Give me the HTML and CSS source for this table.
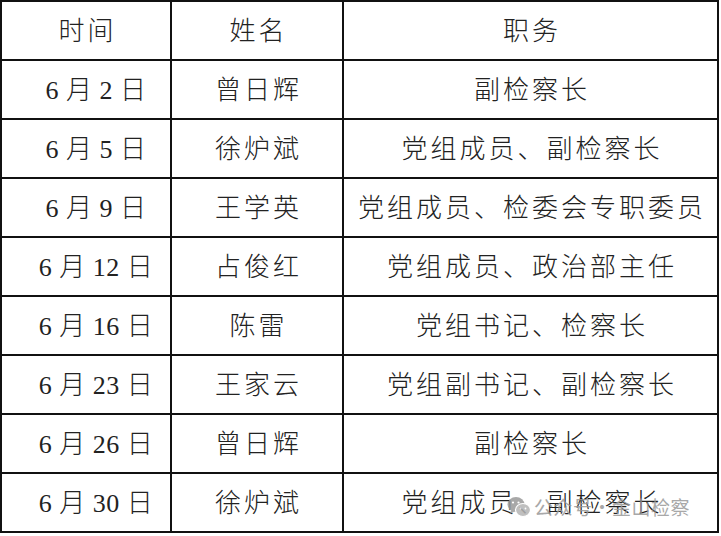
FILE: index.html
```html
<!DOCTYPE html>
<html lang="zh">
<head>
<meta charset="utf-8">
<link rel="stylesheet" href="styles.css">
</head>
<body>
<div class="sheet">
  <div class="grid">
    <div class="cell">时间</div><div class="cell">姓名</div><div class="cell">职务</div>
    <div class="cell date">6 月 2 日</div><div class="cell">曾日辉</div><div class="cell">副检察长</div>
    <div class="cell date">6 月 5 日</div><div class="cell">徐炉斌</div><div class="cell">党组成员、副检察长</div>
    <div class="cell date">6 月 9 日</div><div class="cell">王学英</div><div class="cell">党组成员、检委会专职委员</div>
    <div class="cell date">6 月 12 日</div><div class="cell">占俊红</div><div class="cell">党组成员、政治部主任</div>
    <div class="cell date">6 月 16 日</div><div class="cell">陈雷</div><div class="cell">党组书记、检察长</div>
    <div class="cell date">6 月 23 日</div><div class="cell">王家云</div><div class="cell">党组副书记、副检察长</div>
    <div class="cell date">6 月 26 日</div><div class="cell">曾日辉</div><div class="cell">副检察长</div>
    <div class="cell date">6 月 30 日</div><div class="cell">徐炉斌</div><div class="cell">党组成员、副检察长</div>
  </div>
  <div class="watermark">
    <svg class="wm-icon" width="24" height="22" viewBox="0 0 24 22">
      <ellipse cx="9" cy="8.5" rx="8.5" ry="7.5" fill="#9a9a9a"/>
      <path d="M4 14 L3 18 L7.5 15.5 Z" fill="#9a9a9a"/>
      <ellipse cx="16" cy="14" rx="7.5" ry="6.5" fill="#b5b5b5" stroke="#fff" stroke-width="1.2"/>
      <circle cx="6" cy="6.5" r="1.1" fill="#fff"/>
      <circle cx="11.5" cy="6.5" r="1.1" fill="#fff"/>
      <circle cx="13.5" cy="12.5" r="0.9" fill="#fff"/>
      <circle cx="18.5" cy="12.5" r="0.9" fill="#fff"/>
    </svg>
    <span class="wm-text">公众号·金山检察</span>
  </div>
</div>
</body>
</html>
```
FILE: styles.css
```css
html, body {
  margin: 0;
  padding: 0;
  background: #fff;
}
.sheet {
  position: relative;
  width: 721px;
  height: 536px;
}
.grid {
  display: grid;
  grid-template-columns: 168px 170px 373px;
  grid-auto-rows: 57px;
  gap: 2px;
  padding: 2px;
  width: max-content;
  background: #111;
}
.cell {
  background: #fff;
  display: flex;
  align-items: center;
  justify-content: center;
  font-family: "Liberation Serif", "Noto Sans CJK SC", serif;
  font-size: 26px;
  font-weight: 300;
  color: #222;
  letter-spacing: 3px;
  padding: 0 0 4px 3px;
  white-space: nowrap;
}
.cell.date {
  letter-spacing: 0.5px;
  padding-left: 20px;
}
.watermark {
  position: absolute;
  left: 507px;
  top: 493px;
  display: flex;
  align-items: center;
  gap: 3px;
  opacity: 0.85;
}
.wm-text {
  font-family: "Noto Sans CJK SC", sans-serif;
  font-size: 19px;
  color: #999;
  letter-spacing: 0.5px;
}
```
